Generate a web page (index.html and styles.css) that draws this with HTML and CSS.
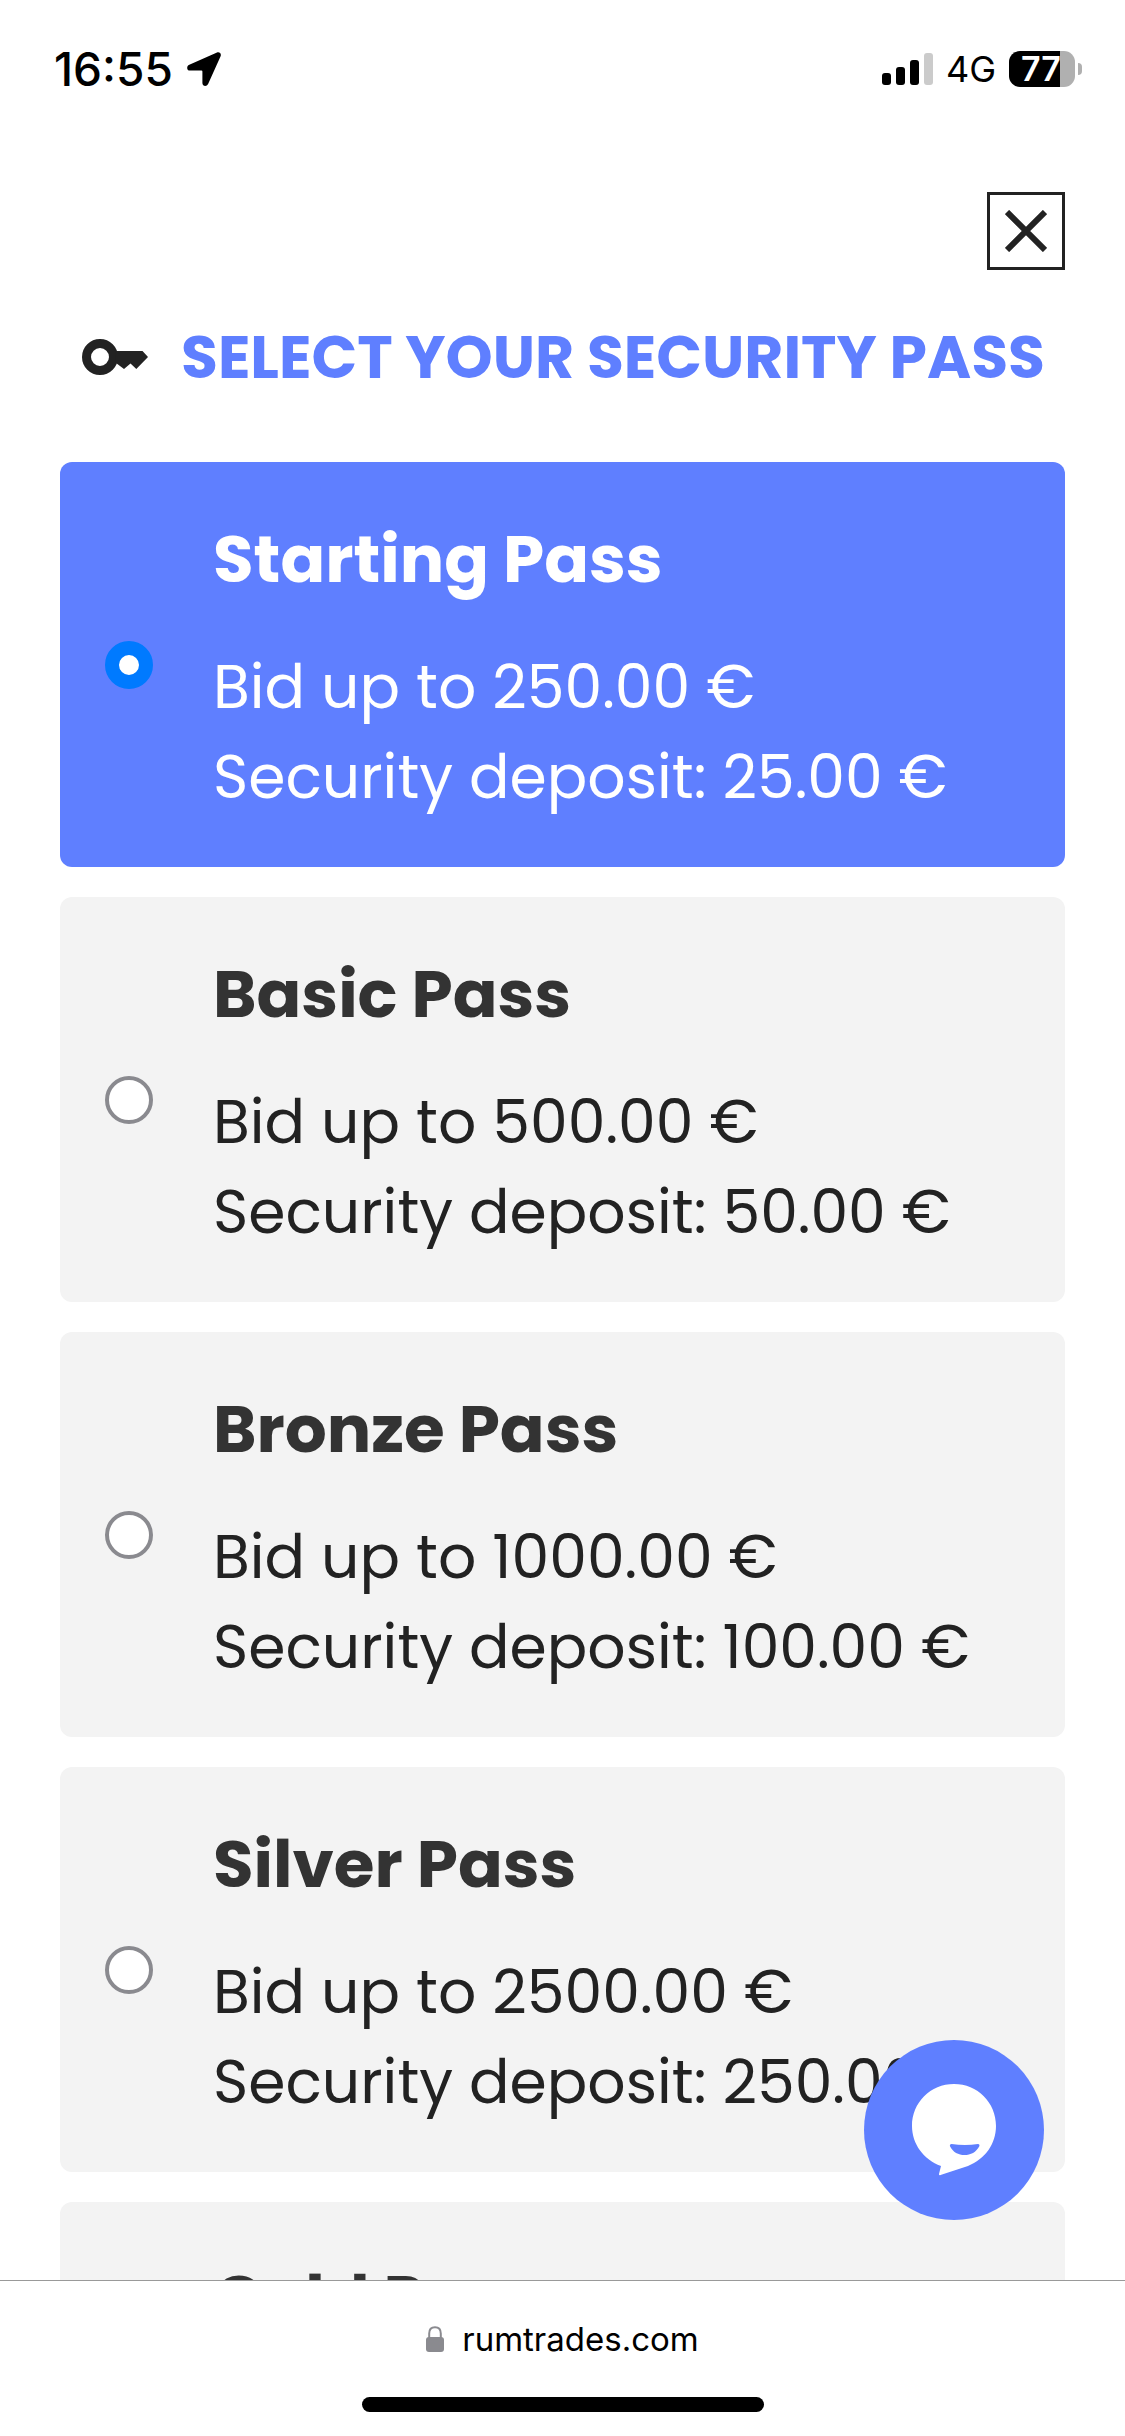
FILE: index.html
```
<!DOCTYPE html>
<html lang="en">
<head>
    <meta charset="UTF-8">
    <meta name="viewport" content="width=device-width, initial-scale=1.0">
    <title>Select your security pass</title>
    <link rel="stylesheet" href="styles.css">
</head>
<body>
    <header class="status-bar">
        <div class="status-left">
            <span class="time">16:55</span>
            <svg class="location" width="34" height="34" viewBox="0 0 34 34">
                <path d="M30 .5 2.300 12.800C-.9 14.300-.3 18.600 3 18.600H14.500C15.100 18.600 15.400 18.900 15.400 19.500V31C15.400 34.300 19.600 35.100 21.100 32L33.600 4.200C34.600 1.700 32.500-.5 30 .5Z"/>
            </svg>
        </div>
        <div class="status-right">
            <svg class="signal" width="51" height="32" viewBox="0 0 51 32">
                <rect x="0" y="20" width="9" height="12" rx="3"/>
                <rect x="14" y="14" width="9" height="18" rx="3"/>
                <rect x="28" y="7" width="9" height="25" rx="3"/>
                <rect x="42" y="0" width="9" height="32" rx="3" fill="#cbcbcb"/>
            </svg>
            <span class="network">4G</span>
            <div class="battery">
                <span class="battery-level">77</span>
                <span class="battery-tip"></span>
            </div>
        </div>
    </header>

    <main class="page">
        <div class="modal">
            <button class="close" type="button" aria-label="Close">
                <svg width="42" height="42" viewBox="0 0 42 42">
                    <path d="M2 2 40 40M40 2 2 40" stroke="#222" stroke-width="6"/>
                </svg>
            </button>

            <div class="modal-title">
                <svg width="66" height="36" viewBox="0 0 66 36">
                    <circle cx="18" cy="18" r="13.500" fill="none" stroke="#222" stroke-width="9"/>
                    <path d="M33 12H60.500L66 18 54.300 30 48.500 24.500 42 30 34 24Z" fill="#222"/>
                </svg>
                <h1>SELECT YOUR SECURITY PASS</h1>
            </div>

            <form class="pass-list">
                <label class="pass">
                    <input type="radio" name="pass" value="starting" checked>
                    <span class="pass-info">
                        <strong>Starting Pass</strong>
                        <span>Bid up to 250.00 €</span>
                        <span>Security deposit: 25.00 €</span>
                    </span>
                </label>
                <label class="pass">
                    <input type="radio" name="pass" value="basic">
                    <span class="pass-info">
                        <strong>Basic Pass</strong>
                        <span>Bid up to 500.00 €</span>
                        <span>Security deposit: 50.00 €</span>
                    </span>
                </label>
                <label class="pass">
                    <input type="radio" name="pass" value="bronze">
                    <span class="pass-info">
                        <strong>Bronze Pass</strong>
                        <span>Bid up to 1000.00 €</span>
                        <span>Security deposit: 100.00 €</span>
                    </span>
                </label>
                <label class="pass">
                    <input type="radio" name="pass" value="silver">
                    <span class="pass-info">
                        <strong>Silver Pass</strong>
                        <span>Bid up to 2500.00 €</span>
                        <span>Security deposit: 250.00 €</span>
                    </span>
                </label>
                <label class="pass">
                    <input type="radio" name="pass" value="gold">
                    <span class="pass-info">
                        <strong>Gold Pass</strong>
                    </span>
                </label>
            </form>
        </div>

        <button class="chat" type="button" aria-label="Open chat">
            <svg width="84" height="92" viewBox="0 0 84 92">
                <path d="M42 0C18.500 0 0 18.500 0 42 0 60 11.500 75.500 29 82L27 90C26.800 91 27.500 91.500 28.500 91L56 82C73 75 84 60 84 42 84 18.500 65.500 0 42 0Z" fill="#fff"/>
                <path d="M39.500 60Q53 62 66 60C67.300 60 67.800 61 67.300 62.200 61.500 74 43.500 74 38 62.200 37.600 61 38.200 60 39.500 60Z" fill="#5f7fff"/>
            </svg>
        </button>
    </main>

    <footer class="url-bar">
        <a class="url" href="#">
            <svg width="18" height="26" viewBox="0 0 18 26">
                <path d="M3.200 12V7.500C3.200 3.500 5.500 1.200 9 1.200S14.800 3.500 14.800 7.500V12" fill="none" stroke="#8a8a8f" stroke-width="2"/>
                <rect x="0" y="11" width="18" height="15" rx="3" fill="#8a8a8f"/>
            </svg>
            <span>rumtrades.com</span>
        </a>
        <div class="home-indicator"></div>
    </footer>
</body>
</html>
```

FILE: styles.css
```
* {
    box-sizing: border-box;
}

body {
    margin: 0;
    height: 100vh;
    display: flex;
    flex-direction: column;
    overflow: hidden;
    background-color: #fff;
    font-family: Poppins, Inter, sans-serif;
    color: #222;
}

button {
    padding: 0;
    border: none;
    cursor: pointer;
}

svg {
    display: block;
    flex: none;
}

/* Status bar */
.status-bar {
    display: flex;
    justify-content: space-between;
    align-items: center;
    height: 138px;
    padding: 0 43px 0 54px;
    font-family: Inter, sans-serif;
    color: #000;
}

.status-left,
.status-right {
    display: flex;
    align-items: center;
}

.status-left {
    gap: 14px;
}

.status-right {
    gap: 13px;
}

.time {
    font-size: 46px;
    font-weight: 500;
}

.network {
    font-size: 36px;
}

.battery {
    display: flex;
    align-items: center;
    gap: 3px;
}

.battery-level {
    width: 66px;
    height: 36px;
    padding-left: 12px;
    border-radius: 11px;
    background: linear-gradient(90deg, #000 77%, #b0b0b0 77%);
    color: #fff;
    font-size: 34px;
    font-weight: 600;
    line-height: 36px;
}

.battery-tip {
    width: 4px;
    height: 12px;
    border-radius: 0 4px 4px 0;
    background-color: #b0b0b0;
}

/* Modal */
.page {
    position: relative;
    flex: 1;
    min-height: 0;
    overflow: hidden;
}

.modal {
    display: flex;
    flex-direction: column;
    padding: 54px 60px 0;
}

.close {
    display: flex;
    align-items: center;
    justify-content: center;
    align-self: flex-end;
    width: 78px;
    height: 78px;
    border: 3px solid #222;
    background-color: #fff;
}

.modal-title {
    display: flex;
    align-items: center;
    gap: 33px;
    margin: 42px 0 60px;
    padding-left: 22px;
}

.modal-title h1 {
    margin: 0;
    color: #5f7fff;
    font-size: 60px;
    font-weight: 700;
    line-height: 90px;
    white-space: nowrap;
}

.pass-list {
    display: flex;
    flex-direction: column;
    gap: 30px;
}

.pass {
    display: flex;
    align-items: center;
    gap: 60px;
    min-height: 405px;
    padding: 45px;
    border-radius: 12px;
    background-color: #f3f3f3;
    cursor: pointer;
}

.pass input {
    appearance: none;
    flex: none;
    width: 48px;
    height: 48px;
    margin: 0;
    border: 4px solid #8a8a8f;
    border-radius: 50%;
    background-color: #fff;
}

.pass input:checked {
    border: 14px solid #007aff;
}

.pass:has(input:checked),
.pass:has(input:checked) strong {
    color: #fff;
}

.pass:has(input:checked) {
    background-color: #5f7fff;
}

.pass-info {
    display: flex;
    flex-direction: column;
    align-self: flex-start;
    font-size: 60px;
    line-height: 90px;
}

.pass-info strong {
    margin-bottom: 30px;
    color: #333;
    font-size: 66px;
    line-height: 105px;
}

/* Chat bubble */
.chat {
    position: absolute;
    right: 81px;
    bottom: 60px;
    display: flex;
    align-items: center;
    justify-content: center;
    width: 180px;
    height: 180px;
    border-radius: 50%;
    background-color: #5f7fff;
}

/* Browser bar */
.url-bar {
    display: flex;
    flex-direction: column;
    align-items: center;
    justify-content: space-between;
    padding: 36px 0 24px;
    height: 156px;
    border-top: 1px solid #999;
    background-color: #fff;
    font-family: Inter, sans-serif;
}

.url {
    display: flex;
    align-items: center;
    gap: 18px;
    color: #000;
    font-size: 33px;
    line-height: 44px;
    text-decoration: none;
}

.home-indicator {
    width: 402px;
    height: 15px;
    border-radius: 8px;
    background-color: #000;
}
```
